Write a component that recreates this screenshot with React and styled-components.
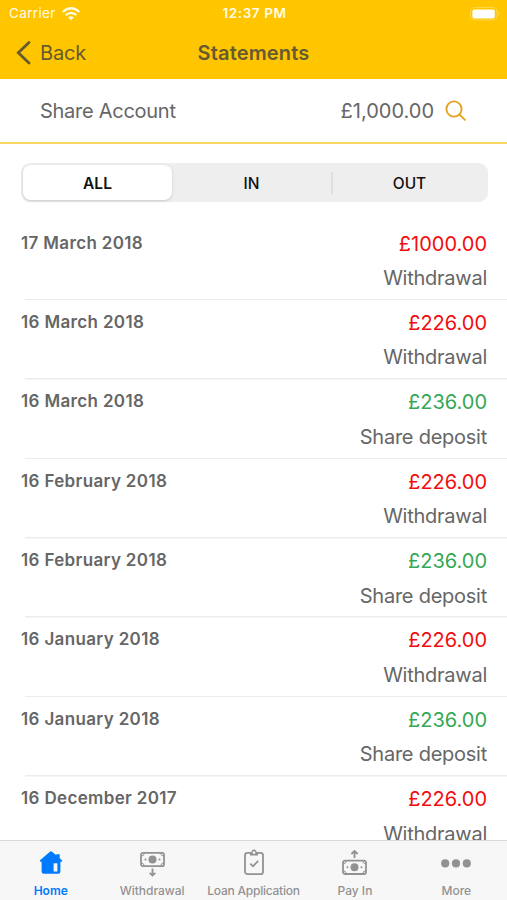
import styled, { createGlobalStyle } from 'styled-components';

const GlobalStyle = createGlobalStyle`
  * {
    box-sizing: border-box;
  }

  body {
    margin: 0;
    background: #fff;
    font-family: Inter, 'Liberation Sans', sans-serif;
    color: #666;
  }
`;

const Screen = styled.div`
  display: flex;
  flex-direction: column;
  height: 900px;
  overflow: hidden;
`;

const Header = styled.header`
  flex: none;
  height: 79px;
  background: #ffc600;
`;

const StatusBar = styled.div`
  display: grid;
  grid-template-columns: 1fr auto 1fr;
  align-items: center;
  height: 27px;
  padding: 0 7px 0 9px;
  color: #fffbe6;
  font-size: 13.5px;
  line-height: 27px;
`;

const Carrier = styled.div`
  display: flex;
  align-items: center;
  gap: 6px;
  letter-spacing: 0.35px;
`;

const Clock = styled.span`
  font-weight: 600;
  letter-spacing: 0.6px;
`;

const Battery = styled.svg`
  justify-self: end;
`;

const NavBar = styled.nav`
  display: grid;
  grid-template-columns: 1fr auto 1fr;
  align-items: center;
  height: 51px;
  padding: 0 16px;
  color: #665a33;
`;

const BackLink = styled.div`
  display: flex;
  align-items: center;
  gap: 9px;
  font-size: 20px;
  letter-spacing: -0.2px;
`;

const Title = styled.h1`
  margin: 0;
  font-size: 20px;
  font-weight: 600;
  letter-spacing: 0.15px;
`;

const Account = styled.section`
  display: flex;
  flex: none;
  align-items: center;
  height: 65px;
  padding: 0 40px;
  border-bottom: 2px solid #f7d563;
  font-size: 20px;
  letter-spacing: -0.27px;
`;

const Balance = styled.span`
  margin: 0 11px 0 auto;
  letter-spacing: 0;
`;

const Segments = styled.div`
  display: flex;
  flex: none;
  width: 467px;
  height: 39px;
  margin: 19px 0 0 21px;
  padding: 2px;
  border-radius: 9px;
  background: #eee;
`;

const Segment = styled.div`
  display: flex;
  flex: ${({ $width }) => $width};
  align-items: center;
  justify-content: center;
  padding-top: 1px;
  border-radius: 8px;
  background: ${({ $active }) => ($active ? '#fff' : 'none')};
  box-shadow: ${({ $active }) => ($active ? '0 1px 3px rgba(0, 0, 0, 0.16)' : 'none')};
  color: #111;
  font-size: 15.5px;
  font-weight: ${({ $active }) => ($active ? 600 : 500)};
`;

const SegmentDivider = styled.span`
  width: 2px;
  height: 22px;
  align-self: center;
  background: #dfdfdf;
`;

const List = styled.main`
  flex: 1;
  min-height: 0;
  padding-top: 19px;
  overflow: hidden;
`;

const Row = styled.article`
  height: 79.4px;
  padding: 9px 20px 0 21px;
  background: linear-gradient(#ececec, #ececec) 25px 100% / 100% 1.5px no-repeat;
`;

const RowTop = styled.div`
  display: flex;
  align-items: center;
  justify-content: space-between;
  height: 27px;
`;

const Date = styled.span`
  margin-top: -2px;
  font-size: 17px;
  font-weight: 600;
  letter-spacing: 0.35px;
`;

const Amount = styled.span`
  color: ${({ $credit }) => ($credit ? '#34a853' : '#f20d0d')};
  font-size: 20px;
`;

const Description = styled.div`
  margin-top: 8px;
  font-size: 20px;
  line-height: 27px;
  letter-spacing: -0.25px;
  text-align: right;
`;

const TabBar = styled.footer`
  display: flex;
  flex: none;
  height: 60px;
  border-top: 1px solid #d9d9d9;
  background: #f7f7f7;
`;

const Tab = styled.div`
  display: flex;
  flex: 1;
  flex-direction: column;
  align-items: center;
  padding-top: 8px;
  color: ${({ $active }) => ($active ? '#007aff' : '#929292')};
  font-size: 12px;
  font-weight: ${({ $active }) => ($active ? 600 : 500)};
  letter-spacing: ${({ $tight }) => ($tight ? '-0.24px' : '0')};
  line-height: 16px;
  white-space: nowrap;
`;

const TabIcon = styled.svg`
  display: block;
  flex: none;
  margin-bottom: 6px;
  overflow: visible;
`;

const WifiIcon = () => (
  <svg width="18" height="14" viewBox="0 0 18 14" fill="none" stroke="currentColor" strokeWidth="2.3">
    <path d="M.8 5Q9-2.4 17.2 5M3.7 8.2Q9 3.6 14.3 8.2" />
    <path d="M6.2 10.4Q9 8 11.8 10.4L9 13.3Z" fill="currentColor" stroke="none" />
  </svg>
);

const BatteryIcon = () => (
  <Battery width="30" height="14" viewBox="0 0 30 14">
    <rect x="0.5" y="0.5" width="26.5" height="12.5" rx="4" fill="none" stroke="#ffd64a" />
    <rect x="2.4" y="2.4" width="22.4" height="9" rx="2" fill="#fff" />
    <path d="M28.4 4.6Q30.4 6.8 28.4 9Z" fill="#ffda5c" />
  </Battery>
);

const BackIcon = () => (
  <svg width="15" height="24" viewBox="0 0 15 24" fill="none" stroke="currentColor" strokeWidth="2.8" strokeLinecap="round">
    <path d="M13 1.5L2.3 11.8L13 22" />
  </svg>
);

const SearchIcon = () => (
  <svg width="22" height="22" viewBox="0 0 22 22" fill="none" stroke="#e3a321" strokeWidth="1.9">
    <circle cx="9" cy="9" r="7.6" />
    <path d="M14.4 14.4L20.4 20.4" />
  </svg>
);

const HomeIcon = () => (
  <TabIcon width="24" height="28" viewBox="0 0 24 28">
    <path
      fill="currentColor"
      d="M12 2.2Q12.6 2.2 13.1 2.7L17.3 6.3V5.3H20.7V9.2L23 11.2Q23.8 12.6 22.3 12.8H21.4V22.6Q21.4 24.8 19.2 24.8H4.8Q2.6 24.8 2.6 22.6V12.8H1.7Q.2 12.6 1 11.2L10.9 2.7Q11.4 2.2 12 2.2Z"
    />
    <rect x="14.6" y="14.3" width="3.8" height="8.2" fill="#f7f7f7" />
  </TabIcon>
);

const Banknote = () => (
  <>
    <rect x="1" y="1" width="23" height="13.4" rx="2" fill="none" stroke="currentColor" strokeWidth="1.8" />
    <circle cx="12.5" cy="7.7" r="4" fill="currentColor" />
    <circle cx="5.5" cy="7.7" r="1" fill="currentColor" />
    <circle cx="19.5" cy="7.7" r="1" fill="currentColor" />
    <path
      d="M1.5 4.2Q4 4 4.2 1.5M1.5 11.2Q4 11.4 4.2 14M20.8 1.5Q21 4 23.5 4.2M20.8 14Q21 11.4 23.5 11.2"
      fill="none"
      stroke="currentColor"
    />
  </>
);

const WithdrawalIcon = () => (
  <TabIcon width="25" height="28" viewBox="0 0 25 28">
    <g transform="translate(0 2.8)">
      <Banknote />
    </g>
    <path d="M12.5 19.4V26M9.7 23.8L12.5 26.6L15.3 23.8" fill="none" stroke="currentColor" strokeWidth="1.8" />
  </TabIcon>
);

const LoanIcon = () => (
  <TabIcon width="20" height="28" viewBox="0 0 20 28" fill="none" stroke="currentColor" strokeWidth="1.8">
    <rect x="1" y="3.8" width="18" height="21.4" rx="2.5" />
    <path d="M6 3.4V6.4H14V3.4H12.6Q12.4 .6 10 .6Q7.6 .6 7.4 3.4Z" fill="currentColor" stroke="none" />
    <circle cx="10" cy="3.6" r="1.4" fill="#f7f7f7" stroke="none" />
    <path d="M6.2 14.7L9 17.3L14.2 11.8" />
  </TabIcon>
);

const PayInIcon = () => (
  <TabIcon width="25" height="28" viewBox="0 0 25 28">
    <g transform="translate(0 10.6)">
      <Banknote />
    </g>
    <path d="M12.5 9V1.8M9.4 5L12.5 1.9L15.6 5" fill="none" stroke="currentColor" strokeWidth="1.8" />
  </TabIcon>
);

const MoreIcon = () => (
  <TabIcon width="30" height="28" viewBox="0 0 30 28" fill="currentColor">
    <circle cx="4.2" cy="14.4" r="4.1" />
    <circle cx="15" cy="14.4" r="4.1" />
    <circle cx="25.8" cy="14.4" r="4.1" />
  </TabIcon>
);

const transactions = [
  { date: '17 March 2018', amount: '£1000.00' },
  { date: '16 March 2018', amount: '£226.00' },
  { date: '16 March 2018', amount: '£236.00', credit: true },
  { date: '16 February 2018', amount: '£226.00' },
  { date: '16 February 2018', amount: '£236.00', credit: true },
  { date: '16 January 2018', amount: '£226.00' },
  { date: '16 January 2018', amount: '£236.00', credit: true },
  { date: '16 December 2017', amount: '£226.00' },
];

const tabs = [
  { label: 'Home', Icon: HomeIcon, active: true },
  { label: 'Withdrawal', Icon: WithdrawalIcon },
  { label: 'Loan Application', Icon: LoanIcon, tight: true },
  { label: 'Pay In', Icon: PayInIcon },
  { label: 'More', Icon: MoreIcon },
];

const Transaction = ({ date, amount, credit }) => (
  <Row>
    <RowTop>
      <Date>{date}</Date>
      <Amount $credit={credit}>{amount}</Amount>
    </RowTop>
    <Description>{credit ? 'Share deposit' : 'Withdrawal'}</Description>
  </Row>
);

const App = () => (
  <Screen>
    <GlobalStyle />
    <Header>
      <StatusBar>
        <Carrier>
          Carrier
          <WifiIcon />
        </Carrier>
        <Clock>12:37 PM</Clock>
        <BatteryIcon />
      </StatusBar>
      <NavBar>
        <BackLink>
          <BackIcon />
          Back
        </BackLink>
        <Title>Statements</Title>
      </NavBar>
    </Header>
    <Account>
      <span>Share Account</span>
      <Balance>£1,000.00</Balance>
      <SearchIcon />
    </Account>
    <Segments>
      <Segment $width={149} $active>
        ALL
      </Segment>
      <Segment $width={159}>IN</Segment>
      <SegmentDivider />
      <Segment $width={153}>OUT</Segment>
    </Segments>
    <List>
      {transactions.map((transaction, index) => (
        <Transaction key={index} {...transaction} />
      ))}
    </List>
    <TabBar>
      {tabs.map(({ label, Icon, active, tight }) => (
        <Tab key={label} $active={active} $tight={tight}>
          <Icon />
          {label}
        </Tab>
      ))}
    </TabBar>
  </Screen>
);

export default App;
